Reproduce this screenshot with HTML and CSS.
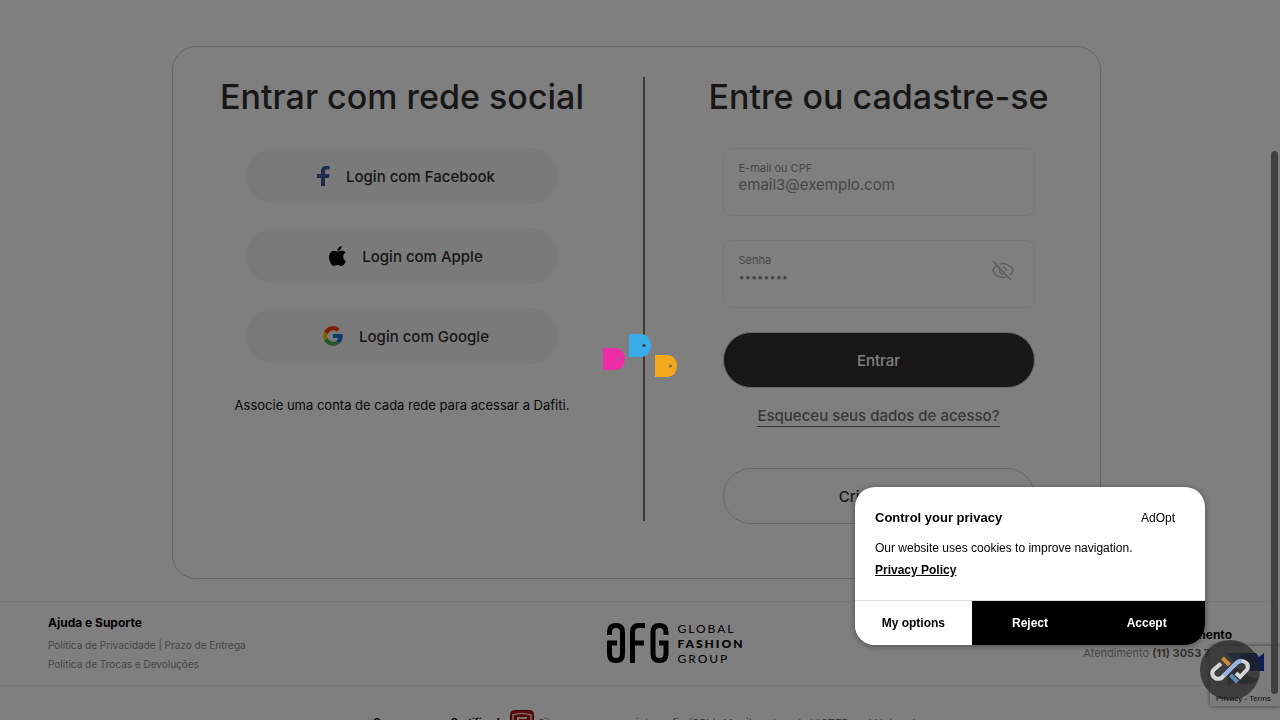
FILE: index.html
```html
<!DOCTYPE html>
<html lang="pt-BR">
<head>
<meta charset="utf-8">
<meta name="viewport" content="width=device-width, initial-scale=1">
<title>Entrar</title>
<link rel="stylesheet" href="styles.css">
</head>
<body>
<div class="page">
  <main class="main">
    <div class="card">
      <section class="column">
        <h1 class="title">Entrar com rede social</h1>
        <div class="stack">
          <button class="button social facebook" type="button">
            <svg width="13" height="20" viewBox="0 0 13 20"><path fill="#3b5998" d="M4 20v-8H0V8h4V5c0-3.300 2-5 5-5h3.500v3.500H10C8.600 3.500 8 4 8 5.200V8h4.400L12 12H8v8z"/></svg>
            Login com Facebook
          </button>
          <button class="button social apple" type="button">
            <svg width="17" height="20" viewBox="0 0 17 20"><path d="M14.200 10.600c0-2 1.100-3.400 2.400-4.100C15.700 5.300 14.300 4.600 12.800 4.600c-1.700 0-2.900 1-3.900 1S6.500 4.700 5 4.700C2.300 4.700 0 7 0 11c0 4.500 2.800 9 5 9 1.300 0 2-.9 3.700-.9s2.300.9 3.700.9c2 0 3.700-3 4.400-5-1.700-.8-2.600-2.300-2.600-4.400zM11.600 3.100C12.400 2.200 12.800 1.100 12.700 0 10.500.2 8.300 2 8.500 4.700c1.200.1 2.400-.6 3.100-1.600z"/></svg>
            Login com Apple
          </button>
          <button class="button social google" type="button">
            <svg width="20" height="20" viewBox="0 0 48 48"><path fill="#ff3d00" d="M3 14C7 5 15 0 24 0c6.500 0 12 2.500 16 6.500l-7 7C30.500 11 27.500 10 24 10c-6 0-11 4-13.200 9.600z"/><path fill="#ffc107" d="M3 13A24 24 0 0 0 3 35.500l8-6.300c-1.300-3.200-1.300-7-.2-10.300z"/><path fill="#4caf50" d="M2.800 35C7 43 15 48 24 48c6 0 11.500-2.200 15.600-6l-7.500-6.300C26 40 15 38.500 11 29z"/><path fill="#1976d2" d="M24 19h23c1.600 9-.7 17.500-7.400 23l-7.500-6.300c2-1.400 3.500-3.400 4.200-6.700H24z"/></svg>
            Login com Google
          </button>
        </div>
        <p class="note">Associe uma conta de cada rede para acessar a Dafiti.</p>
      </section>
      <div class="divider"></div>
      <section class="column">
        <h1 class="title">Entre ou cadastre-se</h1>
        <form class="stack">
          <div class="field">
            <div class="field-text">
              <label for="email">E-mail ou CPF</label>
              <input id="email" type="text" placeholder="email3@exemplo.com">
            </div>
          </div>
          <div class="field">
            <div class="field-text">
              <label for="password">Senha</label>
              <input id="password" class="dots" type="password" placeholder="••••••••">
            </div>
            <button class="reveal" type="button" aria-label="Mostrar senha">
              <svg width="22" height="20" viewBox="0 0 22 20" fill="none" stroke="#b5b5b5" stroke-width="1.300"><path d="M1 0l18 19M5 4.500C3 5.500 1.500 7.500.7 9.300 2.500 14 6.500 16.500 11 16.500c1.500 0 3-.3 4.300-1M8 3.200c6-1.700 11 1.300 13.300 6.100-.6 1.500-1.800 3.200-3.300 4.400M8.500 7.500c-2.500 3 1 7 4 4.700M10.500 6.200c2-.3 4 1.200 4 3.600"/></svg>
            </button>
          </div>
          <button class="button primary" type="submit">Entrar</button>
        </form>
        <a class="forgot" href="#">Esqueceu seus dados de acesso?</a>
        <button class="button outline" type="button">Criar conta</button>
      </section>
    </div>
  </main>

  <footer class="footer">
    <div class="footer-row">
      <div class="footer-block help">
        <h2>Ajuda e Suporte</h2>
        <p><a href="#">Política de Privacidade</a> | <a href="#">Prazo de Entrega</a></p>
        <p><a href="#">Política de Trocas e Devoluções</a></p>
      </div>
      <div class="group-logo">
        <svg width="62" height="40" viewBox="0 0 62 40" fill="none" stroke="#000" stroke-width="5"><path d="M2.500 12V9q0-6.500 6.500-6.500T15.500 9v22q0 6.500-6.500 6.500T2.500 31V20H10M25.500 40V9q0-6.500 6.500-6.500h6M25.500 20H37M59 12V9q0-6.500-6.500-6.500T46 9v22q0 6.500 6.500 6.500T59 31V20h-7"/></svg>
        <div class="group-name"><span>GLOBAL</span><strong>FASHION</strong><span>GROUP</span></div>
      </div>
      <div class="footer-block contact">
        <h2>Central de Atendimento</h2>
        <p>Atendimento <b>(11) 3053 7500</b></p>
      </div>
    </div>
    <div class="security">
      <strong>Compra segura Certificado</strong>
      <svg width="24" height="24" viewBox="0 0 24 24"><rect x=".5" y=".5" width="23" height="23" rx="4" fill="#c51414" stroke="#700"/><path d="M3 5q9-3 18 0v9q-2 6-9 9-7-3-9-9z" fill="#b00" stroke="#ddd" stroke-width="1.500"/><path d="M8 20V8h9M8 13h7" fill="none" stroke="#eee" stroke-width="2"/></svg>
      <span>Site seguro com criptografia (SSL). Monitorado pela VISTER and Network</span>
    </div>
  </footer>

  <aside class="captcha">
    <svg width="40" height="40" viewBox="0 0 40 40"><path fill="#4a90ff" d="M1 7h22v12H10z"/><path fill="#1c3aa9" d="M14 7h16l3 4 5-4v18H22z"/><path fill="#999" d="M1 20l18 4q-2 7 14 8-8 10-24 4l-7 4z"/></svg>
    <div><a href="#">Privacy</a> - <a href="#">Terms</a></div>
  </aside>
</div>

<div class="shade">
  <svg width="74" height="52" viewBox="0 0 74 52">
    <path fill="#ee2ca8" d="M0 14h12q10 1 10 11t-10 11H0z"/><circle cx="15.500" cy="25" r="1.500" fill="#a06090"/>
    <path fill="#38abe8" d="M26 0h12q10 1 10 11.500T38 23H26z"/><circle cx="41" cy="11.500" r="1.500" fill="#333"/>
    <path fill="#f4a81d" d="M52 21h12q10 1 10 11T64 43H52z"/><circle cx="67.500" cy="32" r="1.500" fill="#77705f"/>
  </svg>
</div>
<div class="scroll-thumb"></div>

<button class="adopt" type="button" aria-label="Privacidade">
  <svg width="40" height="28" viewBox="0 0 40 28" fill="none" stroke-width="4"><path stroke="#c98b36" d="M12.500 2l7 7"/><path stroke="#5b89b8" d="M20.500 19l7 7"/><path stroke="#d5d5d5" d="M11 7.500L3.500 14Q1 17 3.500 20.500t8 1.500L25 8.500q4-5 9-3t3.500 7.500L30 21l-4-4"/><path stroke="#94b3e0" d="M14 19.500L25 8.500q3-4 7-3.500"/></svg>
</button>

<section class="cookies" aria-label="Control your privacy">
  <div class="cookies-body">
    <div class="cookies-head"><h2>Control your privacy</h2><span>AdOpt</span></div>
    <p>Our website uses cookies to improve navigation.</p>
    <a href="#">Privacy Policy</a>
  </div>
  <div class="cookies-actions">
    <button type="button">My options</button>
    <button class="solid" type="button">Reject</button>
    <button class="solid" type="button">Accept</button>
  </div>
</section>
</body>
</html>
```
FILE: styles.css
```css
* { box-sizing: border-box; }
body { margin: 0; background: #fff; color: #2e2e2e; font-family: Inter, sans-serif; }
h1, h2, p { margin: 0; }
a { color: inherit; text-decoration: none; }
button, input { font: inherit; color: inherit; }
svg { display: block; flex: none; }

.page { height: 100vh; overflow: hidden; }
.main { padding: 46px 7px 22px 0; }
.card {
  display: grid;
  grid-template-columns: 458fr 2px 443fr;
  gap: 12px;
  width: 100%;
  max-width: 929px;
  margin: 0 auto;
  padding: 30px 0 54px;
  border: 1px solid #ccc;
  border-radius: 24px;
}
.column { display: flex; flex-direction: column; align-items: center; }
.divider { margin-bottom: 3px; background: #777; }
.title { margin-bottom: 31px; font-size: 34px; line-height: 40px; font-weight: 500; white-space: nowrap; }
.stack { display: flex; flex-direction: column; gap: 24px; width: 312px; }

.button {
  display: flex;
  align-items: center;
  justify-content: center;
  width: 312px;
  height: 56px;
  padding: 0;
  border: 0;
  border-radius: 28px;
  font-size: 15px;
  font-weight: 500;
}
.social { gap: 16px; padding-left: 8px; background: #f5f5f5; }
.primary { background: #2e2e2e; color: #fff; border: 1px solid #ccc; }
.outline { background: #fff; border: 1px solid #ccc; }
.note { margin-top: 32px; color: #111; font-size: 13px; line-height: 18px; }

.field {
  display: flex;
  align-items: flex-start;
  justify-content: space-between;
  height: 68px;
  padding: 12px 20px 0 15px;
  border: 1px solid #eee;
  border-radius: 8px;
}
.field-text { display: flex; flex-direction: column; flex: 1; }
.field label { color: #8c8c8c; font-size: 11px; line-height: 14px; }
.field input { width: 100%; height: 20px; padding: 0; border: 0; outline: 0; background: none; font-size: 15px; line-height: 20px; }
.field .dots { font-size: 11px; }
.field input::placeholder { color: #8c8c8c; opacity: 1; }
.reveal { margin-top: 8px; padding: 0; border: 0; background: none; }
.forgot { margin: 17px 0 41px; color: #707070; border-bottom: 1px solid #666; font-size: 15px; line-height: 21px; font-weight: 500; }

.footer { font-size: 11px; }
.footer-row {
  display: grid;
  grid-template-columns: 1fr auto 1fr;
  height: 85px;
  padding: 11px 48px 0;
  border: solid #eee;
  border-width: 1px 0;
}
.footer-block { color: #8c8c8c; line-height: 19px; }
.footer-block h2 { margin-bottom: 3px; color: #000; font-size: 12px; line-height: 20px; font-weight: 700; }
.help { font-size: 10px; }
.contact { text-align: right; }
.contact h2 { margin-top: 12px; line-height: 19px; margin-bottom: 0; }
.contact b { color: #666; }
.group-logo { display: flex; align-items: flex-start; gap: 8px; margin-left: 72px; padding-top: 10px; color: #000; }
.group-name { display: flex; flex-direction: column; margin-top: -2px; font-family: Lato, sans-serif; font-size: 12px; line-height: 15px; letter-spacing: 2px; font-weight: 400; }
.group-name strong { font-weight: 900; }
.security { display: flex; justify-content: center; gap: 4px; padding: 24px 0 0 12px; white-space: nowrap; color: #777; font-size: 10px; }
.security strong, .security span { padding-top: 6px; }
.security span { font-size: 11px; }
.security strong { color: #000; }

.captcha {
  position: fixed;
  right: 0;
  bottom: 14px;
  width: 70px;
  height: 60px;
  padding-left: 16px;
  background: #f9f9f9;
  border-radius: 2px;
  box-shadow: 0 0 5px #777;
}
.captcha div { margin: 8px 0 0 -10px; color: #222; font: 8px "Liberation Sans", sans-serif; }

.shade { position: fixed; inset: 0; display: grid; place-items: center; background: rgb(0 0 0 / 50%); }
.scroll-thumb { position: fixed; right: 2px; top: 151px; bottom: 26px; width: 7px; border-radius: 4px; background: #404040; }
.adopt {
  position: fixed;
  right: 20px;
  bottom: 20px;
  display: grid;
  place-items: center;
  width: 60px;
  height: 60px;
  padding: 0;
  border: 0;
  border-radius: 50%;
  background: rgb(34 34 34 / 70%);
}

.cookies {
  position: fixed;
  right: 75px;
  bottom: 75px;
  width: 350px;
  overflow: hidden;
  border-radius: 20px;
  background: #fff;
  color: #000;
  box-shadow: 0 1px 6px rgb(0 0 0 / 40%);
  font-family: "Liberation Sans", sans-serif;
  font-size: 12px;
}
.cookies-body { padding: 20px 20px 19px; line-height: 22px; }
.cookies-head { display: flex; justify-content: space-between; margin-bottom: 8px; padding-right: 10px; }
.cookies-head h2 { font-size: 13px; font-weight: 700; line-height: 22px; }
.cookies-body a { font-weight: 700; text-decoration: underline; }
.cookies-actions { display: grid; grid-template-columns: repeat(3, 1fr); border-top: 1px solid #ddd; }
.cookies-actions button { height: 44px; padding: 0; border: 0; background: #fff; font-weight: 700; }
.cookies-actions .solid { background: #000; color: #fff; }
```
